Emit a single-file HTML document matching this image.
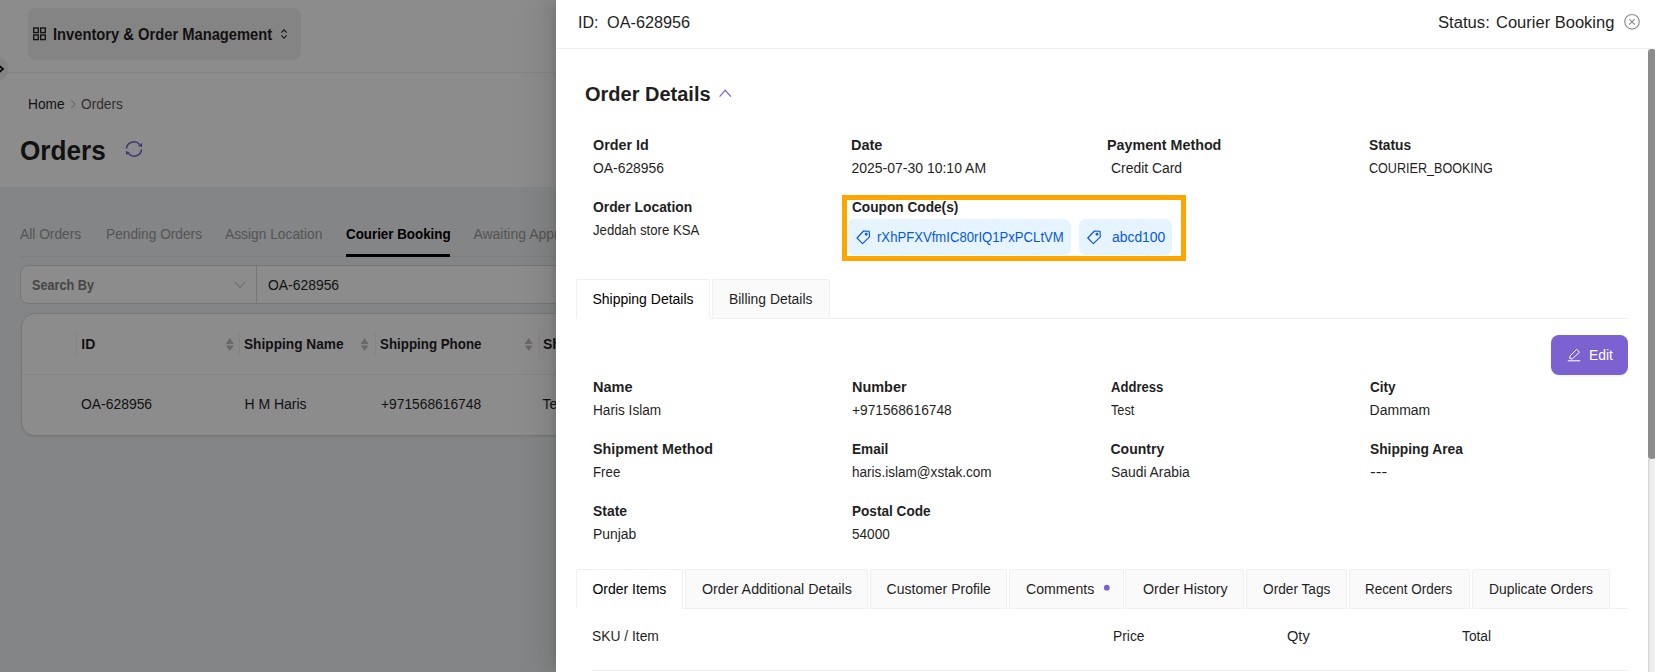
<!DOCTYPE html>
<html><head><meta charset="utf-8">
<style>
html,body{margin:0;padding:0}
body{width:1655px;height:672px;overflow:hidden;position:relative;background:#f0f2f5;font-family:"Liberation Sans",sans-serif;color:#1f1f1f}
.a{position:absolute;box-sizing:border-box}
.t{position:absolute;line-height:1;white-space:nowrap;transform-origin:0 0}
.ctab{position:absolute;box-sizing:border-box;background:#fafafa;border:1px solid #f0f0f0;border-radius:2px 2px 0 0}
.ctab.active{background:#fff;border-bottom-color:#fff}
svg{position:absolute;overflow:visible}
</style></head><body>
<!-- ===== underlying page ===== -->
<div class="a" style="left:0;top:0;width:1655px;height:187px;background:#fff"></div>
<div class="a" style="left:28.2px;top:8px;width:273px;height:51.5px;background:#f0f0f0;border-radius:8px"></div>
<div class="a" style="left:0;top:72px;width:1655px;height:1px;background:#f0f0f0"></div>
<div class="a" style="left:-18px;top:56px;width:26px;height:26px;border-radius:50%;background:#f0f0f0"></div>
<svg style="left:0;top:0" width="10" height="100"><path d="M-1 65.5 L3 69 L-1 72.5" fill="none" stroke="#000" stroke-width="1.8"/></svg>
<!-- grid icon -->
<svg style="left:0;top:0" width="60" height="60"><g fill="none" stroke="#262626" stroke-width="1.4"><rect x="33.7" y="28" width="4.6" height="4.6"/><rect x="40.7" y="28" width="4.6" height="4.6"/><rect x="33.7" y="35" width="4.6" height="4.6"/><rect x="40.7" y="35" width="4.6" height="4.6"/></g></svg>
<!-- up-down icon -->
<svg style="left:0;top:0" width="300" height="60"><g fill="none" stroke="#1f1f1f" stroke-width="1.05"><path d="M281.4 32.7 L284 29.8 L286.6 32.7"/><path d="M281.4 35.4 L284 38.3 L286.6 35.4"/></g></svg>
<!-- breadcrumb chevron -->
<svg style="left:0;top:0" width="100" height="120"><path d="M71.2 100.5 L75.2 104.3 L71.2 108.1" fill="none" stroke="#a6a6a6" stroke-width="1"/></svg>
<!-- refresh icon -->
<svg style="left:0;top:0" width="160" height="170"><g fill="none" stroke="#7b5fd0" stroke-width="1.5"><path d="M126.4 148.6 A7.6 7.6 0 0 1 139.6 144.4"/><path d="M141.6 149.3 A7.6 7.6 0 0 1 128.4 153.6"/></g><path d="M137.8 145.9 L142.2 143 L142 147 Z" fill="#7b5fd0"/><path d="M130 152.4 L125.8 151 L126.2 155 Z" fill="#7b5fd0"/></svg>
<!-- tabs line + ink -->
<div class="a" style="left:20px;top:256px;width:1640px;height:1px;background:#e6e6e6"></div>
<div class="a" style="left:346px;top:254px;width:103.5px;height:2.5px;background:#000"></div>
<!-- search -->
<div class="a" style="left:20.4px;top:265.2px;width:237px;height:39.2px;background:#fff;border:1px solid #d9d9d9;border-radius:8px 0 0 8px"></div>
<div class="a" style="left:256.3px;top:265.2px;width:1400px;height:39.2px;background:#fff;border:1px solid #d9d9d9;border-left:1px solid #d9d9d9"></div>
<svg style="left:0;top:0" width="260" height="300"><path d="M235 282 L240 287.5 L245 282" fill="none" stroke="#bfbfbf" stroke-width="1.1"/></svg>
<!-- table card -->
<div class="a" style="left:20.8px;top:313.2px;width:1640px;height:122.6px;background:#fff;border:1px solid #dadada;border-radius:14px;box-shadow:0 1px 2px rgba(0,0,0,0.08)"></div>
<div class="a" style="left:21px;top:374px;width:1640px;height:1px;background:#f0f0f0"></div>
<div class="a" style="left:75.5px;top:333px;width:1px;height:22px;background:#f0f0f0"></div>
<div class="a" style="left:239px;top:333px;width:1px;height:22px;background:#f0f0f0"></div>
<div class="a" style="left:374.5px;top:333px;width:1px;height:22px;background:#f0f0f0"></div>
<div class="a" style="left:538.5px;top:333px;width:1px;height:22px;background:#f0f0f0"></div>
<svg style="left:0;top:0" width="560" height="360"><g fill="#bfbfbf">
<path d="M225.6 344 L229.8 338 L234 344Z"/><path d="M225.6 345.5 L229.8 351 L234 345.5Z"/>
<path d="M360.6 344 L364.6 338 L368.6 344Z"/><path d="M360.6 345.5 L364.6 351 L368.6 345.5Z"/>
<path d="M524.7 344 L528.7 338 L532.7 344Z"/><path d="M524.7 345.5 L528.7 351 L532.7 345.5Z"/>
</g></svg>
<div class="t" id="t0" style="left:52.7px;top:27.0px;font-size:16px;font-weight:bold;color:#1f1f1f;transform:scaleX(0.9198);">Inventory &amp; Order Management</div>
<div class="t" id="t1" style="left:28.1px;top:97.0px;font-size:14px;color:#1f1f1f;transform:scaleX(0.9778);">Home</div>
<div class="t" id="t2" style="left:81.2px;top:97.0px;font-size:14px;color:#595959;transform:scaleX(0.9780);">Orders</div>
<div class="t" id="t3" style="left:20.4px;top:136.6px;font-size:28px;font-weight:bold;color:#1f1f1f;transform:scaleX(0.9333);">Orders</div>
<div class="t" id="t4" style="left:19.8px;top:226.8px;font-size:14px;color:#9a9a9a;transform:scaleX(0.9839);">All Orders</div>
<div class="t" id="t5" style="left:105.8px;top:226.8px;font-size:14px;color:#9a9a9a;transform:scaleX(0.9794);">Pending Orders</div>
<div class="t" id="t6" style="left:225.2px;top:226.8px;font-size:14px;color:#9a9a9a;transform:scaleX(0.9847);">Assign Location</div>
<div class="t" id="t7" style="left:345.7px;top:226.8px;font-size:14px;font-weight:bold;color:#000000;transform:scaleX(0.9537);">Courier Booking</div>
<div class="t" id="t8" style="left:473.4px;top:226.8px;font-size:14px;color:#9a9a9a;">Awaiting Approval</div>
<div class="t" id="t9" style="left:31.7px;top:278.2px;font-size:14px;font-weight:bold;color:#808080;transform:scaleX(0.9044);">Search By</div>
<div class="t" id="t10" style="left:267.5px;top:277.6px;font-size:14px;color:#1f1f1f;transform:scaleX(0.9929);">OA-628956</div>
<div class="t" id="t11" style="left:81.3px;top:337.2px;font-size:14px;font-weight:bold;color:#1f1f1f;">ID</div>
<div class="t" id="t12" style="left:244.4px;top:337.2px;font-size:14px;font-weight:bold;color:#1f1f1f;transform:scaleX(0.9770);">Shipping Name</div>
<div class="t" id="t13" style="left:380.4px;top:337.2px;font-size:14px;font-weight:bold;color:#1f1f1f;transform:scaleX(0.9524);">Shipping Phone</div>
<div class="t" id="t14" style="left:542.9px;top:337.2px;font-size:14px;font-weight:bold;color:#1f1f1f;">Shipping City</div>
<div class="t" id="t15" style="left:81.0px;top:396.5px;font-size:14px;color:#1f1f1f;transform:scaleX(0.9929);">OA-628956</div>
<div class="t" id="t16" style="left:244.4px;top:396.5px;font-size:14px;color:#1f1f1f;">H M Haris</div>
<div class="t" id="t17" style="left:381.4px;top:396.5px;font-size:14px;color:#1f1f1f;transform:scaleX(0.9850);">+971568616748</div>
<div class="t" id="t18" style="left:542.4px;top:396.5px;font-size:14px;color:#1f1f1f;">Test</div>
<!-- mask -->
<div class="a" style="left:0;top:0;width:1655px;height:672px;background:rgba(0,0,0,0.45)"></div>
<!-- ===== drawer ===== -->
<div class="a" style="left:556px;top:0;width:1099px;height:672px;background:#fff;box-shadow:-6px 0 16px 0 rgba(0,0,0,0.08),-3px 0 6px -4px rgba(0,0,0,0.12),-9px 0 28px 8px rgba(0,0,0,0.05)"></div>
<div class="a" style="left:556px;top:48px;width:1099px;height:1px;background:#f0f0f0"></div>
<!-- close icon -->
<svg style="left:0;top:0" width="1655" height="40"><circle cx="1632" cy="21.8" r="7.3" fill="none" stroke="#8c8c8c" stroke-width="1.1"/><path d="M1629.3 19.1 L1634.7 24.5 M1634.7 19.1 L1629.3 24.5" stroke="#8c8c8c" stroke-width="1.1"/></svg>
<!-- chevron up -->
<svg style="left:0;top:0" width="800" height="120"><path d="M719.6 96.6 L725.2 90.2 L730.8 96.6" fill="none" stroke="#7b5fd0" stroke-width="1.25"/></svg>
<!-- coupon tags -->
<div class="a" style="left:847px;top:219px;width:224px;height:36px;background:#e6f4ff;border-radius:7px"></div>
<div class="a" style="left:1079px;top:219px;width:93px;height:36px;background:#e6f4ff;border-radius:7px"></div>
<svg style="left:0;top:0" width="1200" height="260"><g fill="none" stroke="#0958d9" stroke-width="1.15" stroke-linejoin="round">
<path d="M863.6 231 L869.2 231.3 L869.5 236.9 L862.6 243.6 L857 238 Z"/><circle cx="866.2" cy="234.2" r="0.9"/>
<path d="M1094.4 231 L1100 231.3 L1100.3 236.9 L1093.4 243.6 L1087.8 238 Z"/><circle cx="1097" cy="234.2" r="0.9"/>
</g></svg>
<!-- orange highlight -->
<div class="a" style="left:842px;top:195px;width:344px;height:66px;border:5px solid #ffa500"></div>
<!-- shipping/billing tabs -->
<div class="a" style="left:576px;top:318px;width:1052px;height:1px;background:#f0f0f0"></div>
<div class="ctab active" style="left:576px;top:279px;width:134px;height:40px"></div>
<div class="ctab" style="left:711.7px;top:279px;width:118.6px;height:39.5px"></div>
<!-- edit button -->
<div class="a" style="left:1551.2px;top:335px;width:76.8px;height:39.8px;background:#7b62d0;border-radius:8px;box-shadow:0 2px 0 rgba(0,0,0,0.03)"></div>
<svg style="left:0;top:0" width="1655" height="380"><g fill="none" stroke="#fff" stroke-width="1" stroke-linejoin="round"><path d="M1576.7 349.4 L1579.5 352.2 L1572.2 359 L1569.7 358.4 L1570.1 355.9 Z"/><path d="M1567.8 360.8 L1580.2 360.8" stroke-width="1.1"/></g></svg>
<!-- bottom tabs -->
<div class="a" style="left:576px;top:608px;width:1052px;height:1px;background:#f0f0f0"></div>
<div class="ctab active" style="left:575.9px;width:107.1px;top:569px;height:40px"></div>
<div class="ctab" style="left:684.7px;width:183.4px;top:569px;height:39.5px"></div>
<div class="ctab" style="left:869.5px;width:137.8px;top:569px;height:39.5px"></div>
<div class="ctab" style="left:1009.0px;width:115.0px;top:569px;height:39.5px"></div>
<div class="ctab" style="left:1125.3px;width:118.6px;top:569px;height:39.5px"></div>
<div class="ctab" style="left:1245.6px;width:101.6px;top:569px;height:39.5px"></div>
<div class="ctab" style="left:1348.5px;width:121.7px;top:569px;height:39.5px"></div>
<div class="ctab" style="left:1471.6px;width:138.3px;top:569px;height:39.5px"></div>
<svg style="left:0;top:0" width="1655" height="600"><circle cx="1106.8" cy="587.7" r="2.9" fill="#7b62d0"/></svg>
<div class="a" style="left:592px;top:670px;width:1036px;height:1px;background:#f0f0f0"></div>
<!-- scrollbar -->
<div class="a" style="left:1648px;top:49px;width:8px;height:623px;background:linear-gradient(to right,#cfcfcf 0,#e6e6e6 1.5px,#efefef 3px,#f0f0f0 100%)"></div>
<div class="a" style="left:1648px;top:49px;width:8px;height:409.6px;background:#8c8c8c;border-radius:4px"></div>
<div class="t" id="t19" style="left:578.0px;top:15.1px;font-size:16px;color:#1f1f1f;">ID:</div>
<div class="t" id="t20" style="left:607.4px;top:15.1px;font-size:16px;color:#1f1f1f;transform:scaleX(1.0162);">OA-628956</div>
<div class="t" id="t21" style="left:1438.2px;top:14.6px;font-size:16px;color:#1f1f1f;transform:scaleX(1.0404);">Status:</div>
<div class="t" id="t22" style="left:1496.0px;top:14.6px;font-size:16px;color:#1f1f1f;transform:scaleX(1.0319);">Courier Booking</div>
<div class="t" id="t23" style="left:585.0px;top:83.8px;font-size:20px;font-weight:bold;color:#1f1f1f;">Order Details</div>
<div class="t" id="t24" style="left:592.8px;top:138.0px;font-size:14px;font-weight:bold;color:#1f1f1f;transform:scaleX(1.0245);">Order Id</div>
<div class="t" id="t25" style="left:851.4px;top:138.0px;font-size:14px;font-weight:bold;color:#1f1f1f;transform:scaleX(1.0345);">Date</div>
<div class="t" id="t26" style="left:1107.2px;top:138.0px;font-size:14px;font-weight:bold;color:#1f1f1f;transform:scaleX(1.0209);">Payment Method</div>
<div class="t" id="t27" style="left:1369.4px;top:138.0px;font-size:14px;font-weight:bold;color:#1f1f1f;transform:scaleX(0.9829);">Status</div>
<div class="t" id="t28" style="left:592.8px;top:160.7px;font-size:14px;color:#1f1f1f;transform:scaleX(0.9914);">OA-628956</div>
<div class="t" id="t29" style="left:851.4px;top:160.7px;font-size:14px;color:#1f1f1f;">2025-07-30 10:10 AM</div>
<div class="t" id="t30" style="left:1110.7px;top:160.7px;font-size:14px;color:#1f1f1f;transform:scaleX(0.9929);">Credit Card</div>
<div class="t" id="t31" style="left:1369.4px;top:160.7px;font-size:14px;color:#1f1f1f;transform:scaleX(0.8985);">COURIER_BOOKING</div>
<div class="t" id="t32" style="left:592.8px;top:200.0px;font-size:14px;font-weight:bold;color:#1f1f1f;transform:scaleX(0.9889);">Order Location</div>
<div class="t" id="t33" style="left:851.9px;top:199.6px;font-size:14px;font-weight:bold;color:#1f1f1f;transform:scaleX(0.9766);">Coupon Code(s)</div>
<div class="t" id="t34" style="left:592.8px;top:222.7px;font-size:14px;color:#1f1f1f;transform:scaleX(0.9425);">Jeddah store KSA</div>
<div class="t" id="t35" style="left:876.8px;top:229.8px;font-size:14px;color:#0958d9;transform:scaleX(0.9376);">rXhPFXVfmIC80rIQ1PxPCLtVM</div>
<div class="t" id="t36" style="left:1111.8px;top:229.8px;font-size:14px;color:#0958d9;transform:scaleX(0.9923);">abcd100</div>
<div class="t" id="t37" style="left:592.4px;top:291.8px;font-size:14px;color:#000000;">Shipping Details</div>
<div class="t" id="t38" style="left:729.4px;top:291.8px;font-size:14px;color:#1f1f1f;transform:scaleX(0.9928);">Billing Details</div>
<div class="t" id="t39" style="left:1588.5px;top:347.8px;font-size:14px;color:#ffffff;transform:scaleX(0.9913);">Edit</div>
<div class="t" id="t40" style="left:592.7px;top:380.0px;font-size:14px;font-weight:bold;color:#1f1f1f;transform:scaleX(1.0378);">Name</div>
<div class="t" id="t41" style="left:592.7px;top:402.7px;font-size:14px;color:#1f1f1f;transform:scaleX(0.9735);">Haris Islam</div>
<div class="t" id="t42" style="left:851.8px;top:380.0px;font-size:14px;font-weight:bold;color:#1f1f1f;transform:scaleX(1.0308);">Number</div>
<div class="t" id="t43" style="left:851.8px;top:402.7px;font-size:14px;color:#1f1f1f;transform:scaleX(0.9810);">+971568616748</div>
<div class="t" id="t44" style="left:1110.5px;top:380.0px;font-size:14px;font-weight:bold;color:#1f1f1f;transform:scaleX(0.9339);">Address</div>
<div class="t" id="t45" style="left:1110.5px;top:402.7px;font-size:14px;color:#1f1f1f;transform:scaleX(0.9077);">Test</div>
<div class="t" id="t46" style="left:1369.6px;top:380.0px;font-size:14px;font-weight:bold;color:#1f1f1f;transform:scaleX(0.9692);">City</div>
<div class="t" id="t47" style="left:1369.6px;top:402.7px;font-size:14px;color:#1f1f1f;">Dammam</div>
<div class="t" id="t48" style="left:592.7px;top:442.0px;font-size:14px;font-weight:bold;color:#1f1f1f;transform:scaleX(1.0207);">Shipment Method</div>
<div class="t" id="t49" style="left:592.7px;top:464.7px;font-size:14px;color:#1f1f1f;transform:scaleX(0.9481);">Free</div>
<div class="t" id="t50" style="left:851.8px;top:442.0px;font-size:14px;font-weight:bold;color:#1f1f1f;transform:scaleX(0.9722);">Email</div>
<div class="t" id="t51" style="left:851.8px;top:464.7px;font-size:14px;color:#1f1f1f;transform:scaleX(0.9690);">haris.islam@xstak.com</div>
<div class="t" id="t52" style="left:1110.5px;top:442.0px;font-size:14px;font-weight:bold;color:#1f1f1f;">Country</div>
<div class="t" id="t53" style="left:1110.5px;top:464.7px;font-size:14px;color:#1f1f1f;transform:scaleX(0.9910);">Saudi Arabia</div>
<div class="t" id="t54" style="left:1369.6px;top:442.0px;font-size:14px;font-weight:bold;color:#1f1f1f;transform:scaleX(0.9840);">Shipping Area</div>
<div class="t" id="t55" style="left:1369.6px;top:464.7px;font-size:14px;color:#1f1f1f;transform:scaleX(1.2308);">---</div>
<div class="t" id="t56" style="left:592.7px;top:504.0px;font-size:14px;font-weight:bold;color:#1f1f1f;transform:scaleX(0.9939);">State</div>
<div class="t" id="t57" style="left:592.7px;top:526.7px;font-size:14px;color:#1f1f1f;transform:scaleX(0.9929);">Punjab</div>
<div class="t" id="t58" style="left:851.8px;top:504.0px;font-size:14px;font-weight:bold;color:#1f1f1f;transform:scaleX(0.9709);">Postal Code</div>
<div class="t" id="t59" style="left:851.8px;top:526.7px;font-size:14px;color:#1f1f1f;transform:scaleX(0.9711);">54000</div>
<div class="t" id="t60" style="left:592.4px;top:582.0px;font-size:14px;color:#000000;">Order Items</div>
<div class="t" id="t61" style="left:701.7px;top:582.0px;font-size:14px;color:#1f1f1f;transform:scaleX(1.0185);">Order Additional Details</div>
<div class="t" id="t62" style="left:886.6px;top:582.0px;font-size:14px;color:#1f1f1f;">Customer Profile</div>
<div class="t" id="t63" style="left:1025.9px;top:582.0px;font-size:14px;color:#1f1f1f;transform:scaleX(1.0076);">Comments</div>
<div class="t" id="t64" style="left:1142.7px;top:582.0px;font-size:14px;color:#1f1f1f;transform:scaleX(1.0171);">Order History</div>
<div class="t" id="t65" style="left:1262.6px;top:582.0px;font-size:14px;color:#1f1f1f;transform:scaleX(0.9765);">Order Tags</div>
<div class="t" id="t66" style="left:1365.4px;top:582.0px;font-size:14px;color:#1f1f1f;transform:scaleX(0.9589);">Recent Orders</div>
<div class="t" id="t67" style="left:1488.9px;top:582.0px;font-size:14px;color:#1f1f1f;transform:scaleX(0.9894);">Duplicate Orders</div>
<div class="t" id="t68" style="left:591.6px;top:629.0px;font-size:14px;color:#1f1f1f;transform:scaleX(0.9879);">SKU / Item</div>
<div class="t" id="t69" style="left:1113.4px;top:629.0px;font-size:14px;color:#1f1f1f;transform:scaleX(0.9867);">Price</div>
<div class="t" id="t70" style="left:1287.4px;top:629.0px;font-size:14px;color:#1f1f1f;transform:scaleX(1.0429);">Qty</div>
<div class="t" id="t71" style="left:1461.6px;top:629.0px;font-size:14px;color:#1f1f1f;transform:scaleX(0.9828);">Total</div>
</body></html>
